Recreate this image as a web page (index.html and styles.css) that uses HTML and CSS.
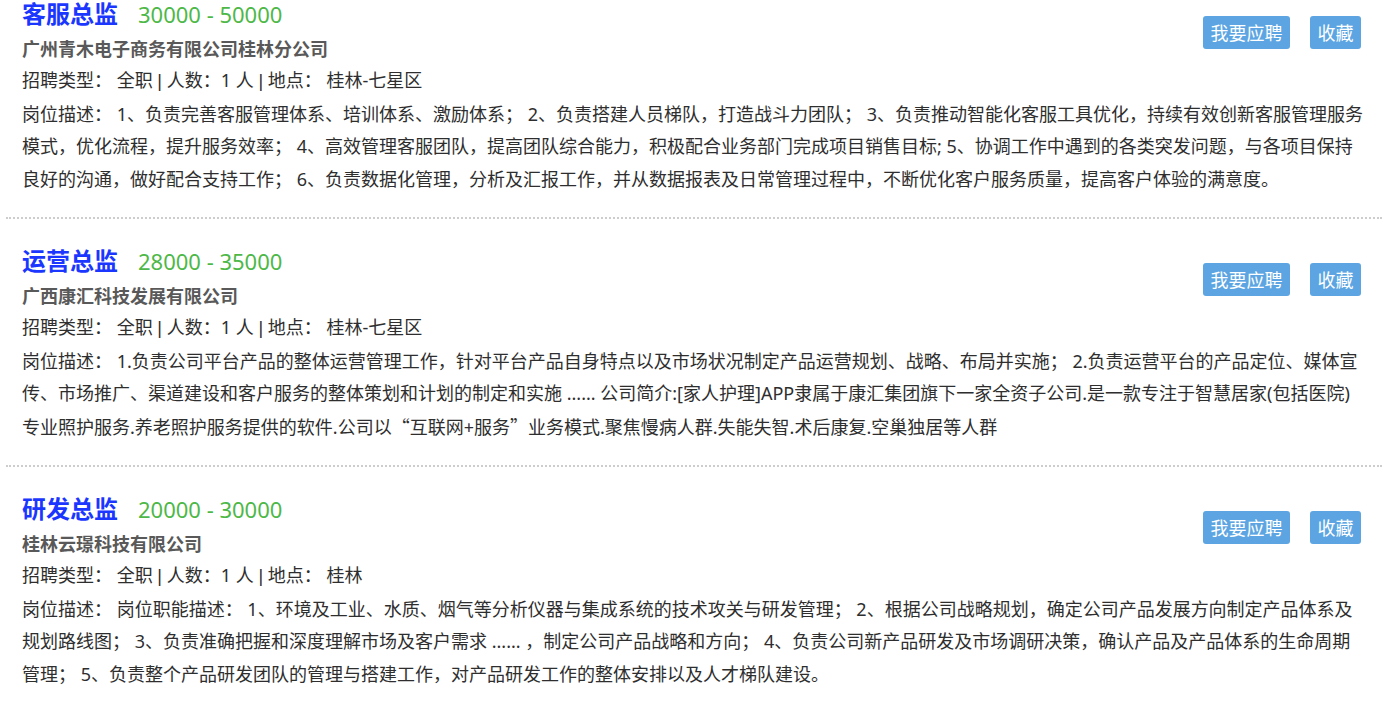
FILE: index.html
```html
<!DOCTYPE html>
<html lang="zh-CN">
<head>
<meta charset="utf-8">
<title>职位列表</title>
<link rel="stylesheet" href="styles.css">
</head>
<body>
<div class="job-list">
  <div class="job">
    <div class="actions">
      <a class="btn">我要应聘</a>
      <a class="btn">收藏</a>
    </div>
    <div class="head"><span class="title">客服总监</span><span class="salary">30000 - 50000</span></div>
    <div class="company">广州青木电子商务有限公司桂林分公司</div>
    <div class="info">招聘类型： 全职 <span class="sep">|</span> 人数：1 人 <span class="sep">|</span> 地点： 桂林-七星区</div>
    <div class="desc">岗位描述： 1、负责完善客服管理体系、培训体系、激励体系； 2、负责搭建人员梯队，打造战斗力团队； 3、负责推动智能化客服工具优化，持续有效创新客服管理服务模式，优化流程，提升服务效率； 4、高效管理客服团队，提高团队综合能力，积极配合业务部门完成项目销售目标; 5、协调工作中遇到的各类突发问题，与各项目保持良好的沟通，做好配合支持工作； 6、负责数据化管理，分析及汇报工作，并从数据报表及日常管理过程中，不断优化客户服务质量，提高客户体验的满意度。</div>
  </div>
  <div class="job">
    <div class="actions">
      <a class="btn">我要应聘</a>
      <a class="btn">收藏</a>
    </div>
    <div class="head"><span class="title">运营总监</span><span class="salary">28000 - 35000</span></div>
    <div class="company">广西康汇科技发展有限公司</div>
    <div class="info">招聘类型： 全职 <span class="sep">|</span> 人数：1 人 <span class="sep">|</span> 地点： 桂林-七星区</div>
    <div class="desc">岗位描述： 1.负责公司平台产品的整体运营管理工作，针对平台产品自身特点以及市场状况制定产品运营规划、战略、布局并实施； 2.负责运营平台的产品定位、媒体宣传、市场推广、渠道建设和客户服务的整体策划和计划的制定和实施 ...... 公司简介:[家人护理]APP隶属于康汇集团旗下一家全资子公司.是一款专注于智慧居家(包括医院)专业照护服务.养老照护服务提供的软件.公司以<span class="cjk">“</span>互联网+服务<span class="cjk">”</span>业务模式.聚焦慢病人群.失能失智.术后康复.空巢独居等人群</div>
  </div>
  <div class="job">
    <div class="actions">
      <a class="btn">我要应聘</a>
      <a class="btn">收藏</a>
    </div>
    <div class="head"><span class="title">研发总监</span><span class="salary">20000 - 30000</span></div>
    <div class="company">桂林云璟科技有限公司</div>
    <div class="info">招聘类型： 全职 <span class="sep">|</span> 人数：1 人 <span class="sep">|</span> 地点： 桂林</div>
    <div class="desc">岗位描述： 岗位职能描述： 1、环境及工业、水质、烟气等分析仪器与集成系统的技术攻关与研发管理； 2、根据公司战略规划，确定公司产品发展方向制定产品体系及规划路线图； 3、负责准确把握和深度理解市场及客户需求 ...... ，制定公司产品战略和方向； 4、负责公司新产品研发及市场调研决策，确认产品及产品体系的生命周期<br>管理； 5、负责整个产品研发团队的管理与搭建工作，对产品研发工作的整体安排以及人才梯队建设。</div>
  </div>
</div>
</body>
</html>
```

FILE: styles.css
```css
html, body {
  margin: 0;
  padding: 0;
  background: #ffffff;
}

body {
  font-family: "Noto Sans", "Noto Sans CJK SC", sans-serif;
  color: #2e2e2e;
  font-size: 18px;
}

.job-list {
  padding: 0 4px 0 6px;
}

.job {
  padding: 28px 18px 22px 16px;
  border-bottom: 2px dotted #cdcdcd;
}

.job:first-child {
  padding-top: 0;
}

.job:last-child {
  border-bottom: none;
}

.actions {
  float: right;
  display: flex;
  gap: 20px;
  margin-top: 16px;
  margin-right: 3px;
}

.btn {
  display: block;
  height: 33px;
  line-height: 33px;
  padding: 0 7.5px;
  background: #5ca5e2;
  color: #ffffff;
  border-radius: 3px;
  font-size: 18px;
  font-family: "Noto Sans CJK SC", sans-serif;
  cursor: pointer;
}

.head {
  height: 26px;
  line-height: 25px;
  white-space: nowrap;
}

.title {
  font-family: "Noto Sans CJK SC", sans-serif;
  font-size: 24px;
  font-weight: 700;
  color: #1b37ff;
}

.salary {
  margin-left: 20px;
  font-size: 22px;
  color: #4db847;
}

.company {
  margin-top: 6px;
  font-family: "Noto Sans CJK SC", sans-serif;
  font-weight: 700;
  color: #595959;
  line-height: 32.4px;
}

.info,
.desc {
  line-height: 32.4px;
}

.sep {
  font-family: "Liberation Sans", sans-serif;
}

.cjk {
  font-family: "Noto Sans CJK SC", sans-serif;
}
```
